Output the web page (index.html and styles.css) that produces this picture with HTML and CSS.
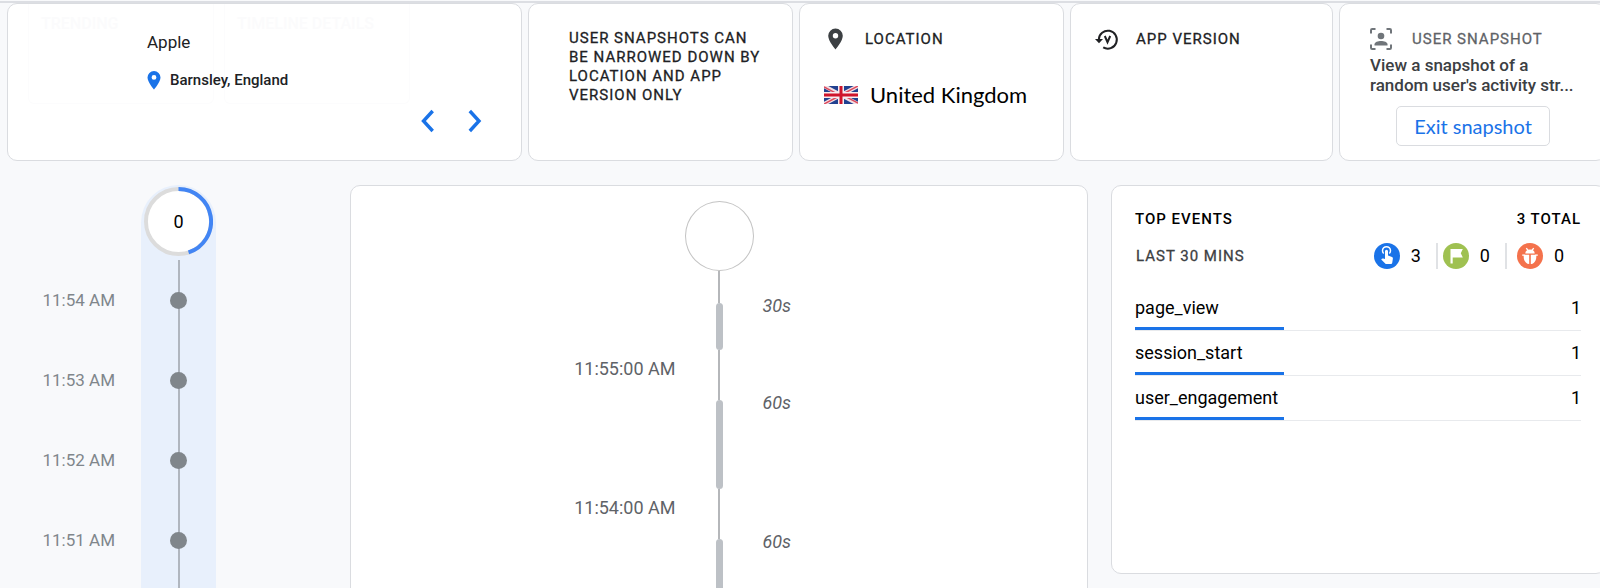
FILE: index.html
```html
<!DOCTYPE html>
<html lang="en">
<head>
  <meta charset="UTF-8">
  <title>User snapshot</title>
  <meta name="viewport" content="width=device-width,initial-scale=1">
  <link rel="stylesheet" href="styles.css">
</head>
<body>
  <div class="app">

    <!-- Filter cards -->
    <header class="cards">
      <section class="card user-card">
        <div class="ghosts" aria-hidden="true">
          <div class="ghost">TRENDING</div>
          <div class="ghost">TIMELINE DETAILS</div>
        </div>
        <div class="device">Apple</div>
        <div class="place">
          <svg width="14" height="20" viewBox="0 0 14 20"><path fill="#1a73e8" fill-rule="evenodd" d="M7 1a6.500 6.500 0 0 0-6.500 6.500C.5 12 7 19.500 7 19.500s6.500-7.500 6.500-12A6.500 6.500 0 0 0 7 1zm0 4a2.400 2.400 0 1 1 0 4.800A2.400 2.400 0 0 1 7 5z"/></svg>
          <span>Barnsley, England</span>
        </div>
        <div class="pager">
          <button type="button" aria-label="Previous user"><svg width="16" height="24" viewBox="0 0 16 24"><path d="M12.700 2 3.500 12l9.200 10"/></svg></button>
          <button type="button" aria-label="Next user"><svg width="16" height="24" viewBox="0 0 16 24"><path d="M2.800 2 12 12 2.800 22"/></svg></button>
        </div>
      </section>

      <section class="card note-card">
        <p class="caps">USER SNAPSHOTS CAN BE NARROWED DOWN BY LOCATION AND APP VERSION ONLY</p>
      </section>

      <section class="card">
        <div class="card-head">
          <svg width="24" height="24" viewBox="0 0 24 24"><path fill="#3c4043" fill-rule="evenodd" d="M11.500 1.500A7.300 7.300 0 0 0 4.200 8.800c0 5.300 7.300 13.700 7.300 13.700s7.300-8.400 7.300-13.700a7.300 7.300 0 0 0-7.300-7.300zm0 4.600a2.700 2.700 0 1 1 0 5.400 2.700 2.700 0 0 1 0-5.400z"/></svg>
          <h2 class="caps">LOCATION</h2>
        </div>
        <div class="country">
          <svg width="34" height="18" viewBox="0 0 34 18">
            <path fill="#214190" d="M0 0h34v18H0z"/>
            <path stroke="#f3dfe4" stroke-width="4" d="M0 0l34 18M34 0L0 18"/>
            <path stroke="#dc4a5c" stroke-width="1.500" d="M0 .8l17 9M34 0L17 9M34 17.200l-17-9M0 18l17-9"/>
            <path stroke="#f6edf0" stroke-width="6" d="M17 0v18M0 9h34"/>
            <path stroke="#cf142b" stroke-width="3" d="M17 0v18M0 9h34"/>
          </svg>
          <span>United Kingdom</span>
        </div>
      </section>

      <section class="card">
        <div class="card-head">
          <svg width="24" height="24" viewBox="0 0 24 24" fill="none" stroke="#202124" stroke-width="2">
            <path d="M3.800 12.500A9 9 0 1 1 8.200 20.400"/>
            <path fill="#202124" stroke="none" d="M0 12h8l-4 4.300z"/>
            <path d="M9.800 9l2.700 6.200L15.200 9"/>
          </svg>
          <h2 class="caps">APP VERSION</h2>
        </div>
      </section>

      <section class="card snapshot-card">
        <div class="card-head">
          <svg width="22" height="24" viewBox="0 0 22 24">
            <path fill="none" stroke="#70757a" stroke-width="2" d="M1 6.500V3.200Q1 2 2.200 2H5.500M16.500 2h3.300Q21 2 21 3.200v3.300M21 17.500v3.300q0 1.200-1.200 1.200H16.500M5.500 22H2.200Q1 22 1 20.800V17.500"/>
            <circle cx="11" cy="9" r="3.300" fill="#70757a"/>
            <path fill="#70757a" d="M4.500 18.500v-1.200c0-2.300 3.500-3.400 6.500-3.400s6.500 1.100 6.500 3.400v1.200z"/>
          </svg>
          <h2 class="caps">USER SNAPSHOT</h2>
        </div>
        <p class="snapshot-text">View a snapshot of a<br>random user's activity str...</p>
        <button type="button" class="exit-btn">Exit snapshot</button>
      </section>
    </header>

    <main class="board">
      <!-- Minutes timeline -->
      <section class="minutes">
        <div class="minute-now">
          <svg class="ring" width="69" height="69" viewBox="0 0 70 70" fill="none" stroke-width="4">
            <circle cx="35" cy="35" r="33" fill="#fff" stroke="#dcdcdc"/>
            <path stroke="#4285f4" d="M35 2a33 33 0 0 1 10.200 64.400"/>
          </svg>
          <span class="ring-count">0</span>
        </div>
        <ol class="minute-list">
          <li><time>11:54 AM</time><span class="dot"></span></li>
          <li><time>11:53 AM</time><span class="dot"></span></li>
          <li><time>11:52 AM</time><span class="dot"></span></li>
          <li><time>11:51 AM</time><span class="dot"></span></li>
        </ol>
      </section>

      <!-- Seconds timeline -->
      <section class="panel stream">
        <div class="stream-user"></div>
        <div class="stream-row lead"><i class="line"></i></div>
        <div class="stream-row half"><i class="bar"></i><em>30s</em></div>
        <div class="stream-row gap"><time>11:55:00 AM</time><i class="line"></i></div>
        <div class="stream-row full"><i class="bar"></i><em>60s</em></div>
        <div class="stream-row gap"><time>11:54:00 AM</time><i class="line"></i></div>
        <div class="stream-row full"><i class="bar"></i><em>60s</em></div>
      </section>

      <!-- Top events -->
      <section class="panel events">
        <div class="events-head"><h2>TOP EVENTS</h2><span>3 TOTAL</span></div>
        <div class="events-sub">
          <span class="caps">LAST 30 MINS</span>
          <div class="counts">
            <span class="count">
              <svg width="26" height="26" viewBox="0 0 26 26"><circle cx="13" cy="13" r="13" fill="#1a73e8"/><path fill="none" stroke="#fff" stroke-width="1.500" d="M9.700 10.500a4 4 0 1 1 5.600 0"/><path fill="#fff" d="M11 8.200a1.500 1.500 0 0 1 3 0v4.300l4 1.600q1 .5.900 1.500l-.7 4.400q-.2 1-1.200 1h-4.600q-.7 0-1.200-.5L7.200 16.400q.9-1.200 2-.8l1.800.5z"/></svg>
              3</span>
            <span class="count">
              <svg width="26" height="26" viewBox="0 0 26 26"><circle cx="13" cy="13" r="13" fill="#9fc151"/><path fill="#fff" d="M7.500 6h12.300l-2 4.200 2 4.300H9.700V20.500H7.500z"/></svg>
              0</span>
            <span class="count">
              <svg width="26" height="26" viewBox="0 0 26 26"><circle cx="13" cy="13" r="13" fill="#f4724c"/><path fill="#fff" d="M8.300 10.500a4.700 4.100 0 0 1 9.400 0z"/><path fill="none" stroke="#fff" stroke-width="1.300" d="M9.300 5.200l1.800 2.300M16.700 5.200l-1.800 2.300M5.200 12.200h2.500M18.300 12.200h2.500"/><path fill="#fff" d="M6.700 11.700h5.500v9.400c-3.300-.4-5.500-3.600-5.500-7.200zM13.800 11.700h5.500v2.200c0 3.600-2.200 6.800-5.500 7.200z"/></svg>
              0</span>
          </div>
        </div>
        <table class="event-table">
          <tbody>
            <tr><th scope="row">page_view<span class="meter" style="width:33.3%"></span></th><td>1</td></tr>
            <tr><th scope="row">session_start<span class="meter" style="width:33.3%"></span></th><td>1</td></tr>
            <tr><th scope="row">user_engagement<span class="meter" style="width:33.3%"></span></th><td>1</td></tr>
          </tbody>
        </table>
      </section>
    </main>
  </div>
</body>
</html>
```
FILE: styles.css
```css
*{box-sizing:border-box}
body{margin:0;background:#f8f9fb;color:#202124;font-family:Roboto,"Liberation Sans",sans-serif;font-size:16px;overflow:hidden}
h2,p,ol{margin:0;padding:0}
button{font:inherit;cursor:pointer;background:none;border:none;padding:0}
svg{display:block;flex:none}
.app{height:100vh;overflow:hidden;padding-top:1px;margin-right:-6px}
.app::before{content:"";display:block;height:2px;background:#dcdee3}
.card,.panel{background:#fff;border:1px solid #dadce0;border-radius:10px}
.caps{font-size:15px;font-weight:400;line-height:19px;letter-spacing:1px;-webkit-text-stroke:.3px}

/* filter cards */
.cards{display:grid;grid-template-columns:515fr 265fr 265fr 263fr 267fr;gap:6px;padding-left:7px}
.card{position:relative;height:158px;padding:23px 24px 0}
.card-head{display:flex;align-items:center;gap:17px;height:24px}
.user-card{padding:28px 38px 0 139px}
.device{position:relative;font-size:17px;line-height:20px}
.place{position:relative;display:flex;align-items:center;gap:9px;margin-top:18px;font-size:15px;font-weight:500;line-height:20px}
.pager{display:flex;justify-content:flex-end;gap:31px;margin-top:19px}
.pager path{fill:none;stroke:#1a73e8;stroke-width:3.4}
.ghosts{position:absolute;top:0;left:20px;display:flex;gap:10px}
.ghost{width:186px;height:100px;padding:10px 12px;border:1px solid #fcfcfd;border-top:none;border-radius:0 0 6px 6px;color:#fbfbfc;font-weight:500;line-height:19px}
.note-card{padding:25px 24px 0 40px}
.country{display:flex;align-items:center;gap:12px;margin-top:30px;font-family:Lato,sans-serif;font-size:22px;line-height:28px;color:#000}
.snapshot-card{padding-left:30px}
.snapshot-card .card-head{gap:20px}
.snapshot-card h2{color:#5f6368}
.snapshot-text{font-size:17px;font-weight:500;line-height:20px;margin-top:4px;white-space:nowrap;color:#3c4043}
.exit-btn{display:block;width:154px;height:40px;margin:11px 0 0 26px;border:1px solid #dadce0;border-radius:5px;color:#1a73e8;font-family:Lato,sans-serif;font-size:20px}

.board{display:grid;grid-template-columns:350px 1fr 495px;align-items:start;margin-top:24px}

/* minutes timeline */
.minutes{margin-left:141px;width:75px;background:#e8f0fc;border-radius:38px 38px 0 0}
.minute-now{display:grid;place-items:center;height:75px;padding-bottom:2px}
.ring,.ring-count{grid-area:1/1}
.ring-count{z-index:1;font-size:18px;color:#000}
.minute-list{list-style:none;padding-bottom:80px;background:linear-gradient(#b0b6bf,#b0b6bf) center/2px 100% no-repeat}
.minute-list li{display:flex;align-items:center;justify-content:flex-end;gap:55px;height:80px;margin-left:-110px;padding-right:29px}
.minute-list time{font-size:17px;color:#80868b;white-space:nowrap}
.dot{width:17px;height:17px;border-radius:50%;background:#80868b}

/* seconds timeline */
.stream{margin-right:23px;padding-top:15px;color:#5f6368;font-size:18px}
.stream-user{width:69px;height:70px;margin:0 auto;border:1px solid #c4c4c4;border-radius:50%}
.stream-row{display:grid;grid-template-columns:1fr 7px 1fr;column-gap:40px}
.stream-row i{grid-column:2;grid-row:1;justify-self:center}
.stream-row time{grid-column:1;justify-self:end;line-height:38px}
.stream-row em{grid-column:3;line-height:20px;margin-top:-7px}
.line{width:2px;background:#b5b7ba}
.bar{width:7px;border-radius:4px;background:#bdc1c6}
.lead{height:32px}
.half{height:47px}
.full{height:89px}
.gap{height:50px}

/* top events */
.events{height:389px;padding:23px 24px 0 23px;color:#000}
.events-head{display:flex;justify-content:space-between;font-size:15px;line-height:20px;letter-spacing:1px;font-weight:500}
.events-head h2{font-size:15px;font-weight:500}
.events-sub{display:flex;justify-content:space-between;align-items:center;height:26px;margin-top:14px;padding:0 2px 0 1px}
.events-sub .caps{color:#3c4043}
.counts{display:flex;font-size:18px}
.count{display:flex;align-items:center;gap:11px;padding-right:15px;line-height:24px}
.count + .count{border-left:2px solid #e0e2e5;padding-left:5px}
.count + .count + .count{padding-left:10px}
.event-table{width:100%;margin-top:16px;border-collapse:collapse;font-size:18px}
.event-table tr{position:relative}
.event-table th,.event-table td{height:45px;padding:0;border-bottom:1px solid #e8eaed;font-weight:400;text-align:left}
.event-table td{text-align:right}
.meter{position:absolute;left:0;bottom:0;height:3px;background:#1a73e8}
```
